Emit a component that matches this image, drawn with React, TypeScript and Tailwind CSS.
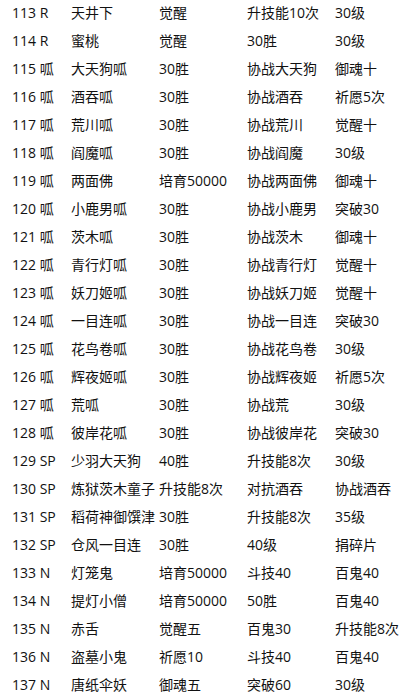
const rows = [
  ["113 R", "天井下", "觉醒", "升技能10次", "30级"],
  ["114 R", "蜜桃", "觉醒", "30胜", "30级"],
  ["115 呱", "大天狗呱", "30胜", "协战大天狗", "御魂十"],
  ["116 呱", "酒吞呱", "30胜", "协战酒吞", "祈愿5次"],
  ["117 呱", "荒川呱", "30胜", "协战荒川", "觉醒十"],
  ["118 呱", "阎魔呱", "30胜", "协战阎魔", "30级"],
  ["119 呱", "两面佛", "培育50000", "协战两面佛", "御魂十"],
  ["120 呱", "小鹿男呱", "30胜", "协战小鹿男", "突破30"],
  ["121 呱", "茨木呱", "30胜", "协战茨木", "御魂十"],
  ["122 呱", "青行灯呱", "30胜", "协战青行灯", "觉醒十"],
  ["123 呱", "妖刀姬呱", "30胜", "协战妖刀姬", "觉醒十"],
  ["124 呱", "一目连呱", "30胜", "协战一目连", "突破30"],
  ["125 呱", "花鸟卷呱", "30胜", "协战花鸟卷", "30级"],
  ["126 呱", "辉夜姬呱", "30胜", "协战辉夜姬", "祈愿5次"],
  ["127 呱", "荒呱", "30胜", "协战荒", "30级"],
  ["128 呱", "彼岸花呱", "30胜", "协战彼岸花", "突破30"],
  ["129 SP", "少羽大天狗", "40胜", "升技能8次", "30级"],
  ["130 SP", "炼狱茨木童子", "升技能8次", "对抗酒吞", "协战酒吞"],
  ["131 SP", "稻荷神御馔津", "30胜", "升技能8次", "35级"],
  ["132 SP", "仓风一目连", "30胜", "40级", "捐碎片"],
  ["133 N", "灯笼鬼", "培育50000", "斗技40", "百鬼40"],
  ["134 N", "提灯小僧", "培育50000", "50胜", "百鬼40"],
  ["135 N", "赤舌", "觉醒五", "百鬼30", "升技能8次"],
  ["136 N", "盗墓小鬼", "祈愿10", "斗技40", "百鬼40"],
  ["137 N", "唐纸伞妖", "御魂五", "突破60", "30级"],
];

const App = () => {
  return (
    <div
      className="w-[414px] h-[699px] overflow-hidden bg-white text-[14px] text-[#111]"
      style={{ fontFamily: '"Open Sans", "Noto Sans CJK SC", sans-serif' }}
    >
      <div className="-mt-[1px] pl-[12px]">
        {rows.map((row) => (
          <div
            key={row[0]}
            className="grid grid-cols-[59px_88px_88px_88px_1fr] h-[28px] items-center leading-[28px] whitespace-nowrap"
          >
            {row.map((cell, i) => (
              <div key={i}>{cell}</div>
            ))}
          </div>
        ))}
      </div>
    </div>
  );
};

export default App;
